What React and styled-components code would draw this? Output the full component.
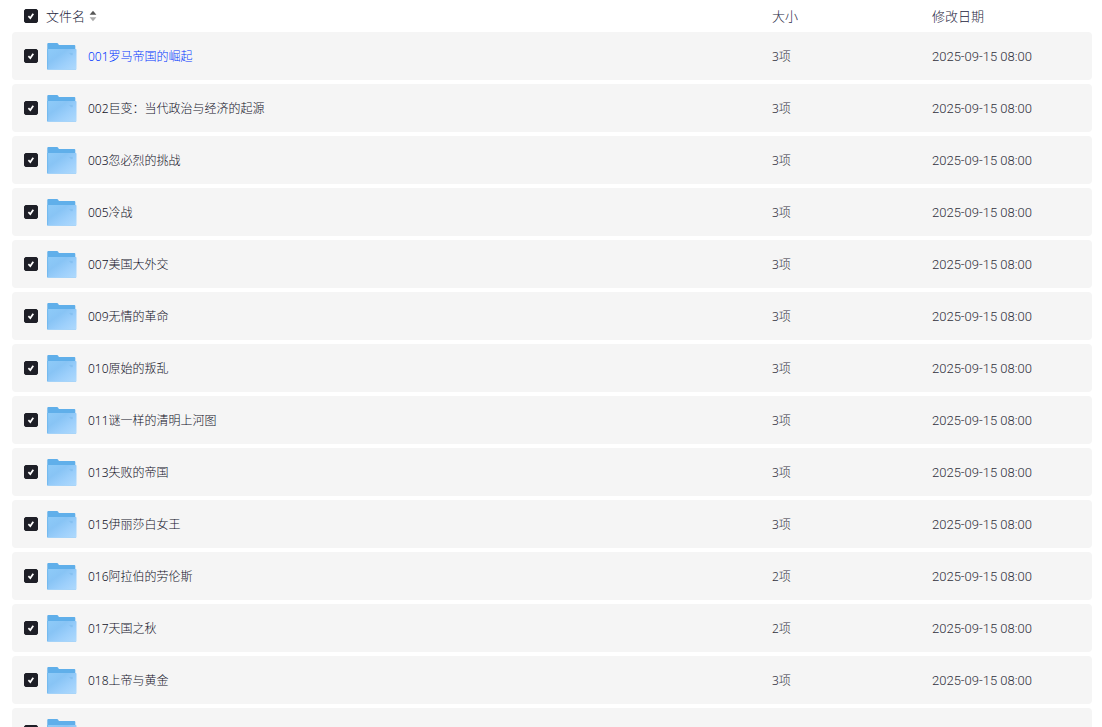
import React, { useState } from 'react';
import styled, { createGlobalStyle } from 'styled-components';

const files = [
  { id: 1, name: '001罗马帝国的崛起', size: '3项', date: '2025-09-15 08:00' },
  { id: 2, name: '002巨变：当代政治与经济的起源', size: '3项', date: '2025-09-15 08:00' },
  { id: 3, name: '003忽必烈的挑战', size: '3项', date: '2025-09-15 08:00' },
  { id: 5, name: '005冷战', size: '3项', date: '2025-09-15 08:00' },
  { id: 7, name: '007美国大外交', size: '3项', date: '2025-09-15 08:00' },
  { id: 9, name: '009无情的革命', size: '3项', date: '2025-09-15 08:00' },
  { id: 10, name: '010原始的叛乱', size: '3项', date: '2025-09-15 08:00' },
  { id: 11, name: '011谜一样的清明上河图', size: '3项', date: '2025-09-15 08:00' },
  { id: 13, name: '013失败的帝国', size: '3项', date: '2025-09-15 08:00' },
  { id: 15, name: '015伊丽莎白女王', size: '3项', date: '2025-09-15 08:00' },
  { id: 16, name: '016阿拉伯的劳伦斯', size: '2项', date: '2025-09-15 08:00' },
  { id: 17, name: '017天国之秋', size: '2项', date: '2025-09-15 08:00' },
  { id: 18, name: '018上帝与黄金', size: '3项', date: '2025-09-15 08:00' },
  // still loading
  { id: 19, name: '', size: '', date: '' },
];

function Check({ label, checked, onChange }) {
  return (
    <CheckBox>
      <input
        type="checkbox"
        aria-label={label}
        checked={checked}
        onChange={onChange}
      />
      {checked && (
        <svg viewBox="0 0 14 14" aria-hidden="true">
          <path
            d="M4.4 7.2 6.3 9.1 9.3 4.7"
            fill="none"
            stroke="#fff"
            strokeWidth="1.7"
          />
        </svg>
      )}
    </CheckBox>
  );
}

function FolderIcon() {
  return (
    <Folder viewBox="0 0 32 32" aria-hidden="true">
      <defs>
        <linearGradient id="front" x1="0" y1="0" x2="1" y2="1">
          <stop offset="0" stopColor="#8ecbf8" />
          <stop offset="0.35" stopColor="#88c4f5" />
          <stop offset="0.65" stopColor="#9ccffb" />
          <stop offset="1" stopColor="#b0dafd" />
        </linearGradient>
      </defs>
      <path
        d="M1.3 4q0-1 1-1H11q.8 0 1.2.7l.7 1.3H28.4q.9 0 .9.9V29H1.3z"
        fill="#60afea"
      />
      <path
        d="M2.2 9h27.6q.7 0 .7.7V29q0 .8-.8.8H2.2q-.9 0-.9-.9V9.7Q1.3 9 2.2 9z"
        fill="url(#front)"
      />
      <path d="M1.6 9v20.4" stroke="#6cb4ed" strokeWidth=".7" />
      <path d="M2 29.5h28" stroke="#9dd0f8" strokeWidth=".7" />
      <path d="M23.4 13.4h3.4M24.4 14.6h2.4" stroke="#7fbcee" strokeWidth=".7" />
    </Folder>
  );
}

function App() {
  const [selected, setSelected] = useState(files.map((f) => f.id));

  const toggle = (id) => {
    setSelected((prev) =>
      prev.includes(id) ? prev.filter((n) => n !== id) : [...prev, id]
    );
  };

  const allSelected = selected.length === files.length;

  const toggleAll = () => {
    setSelected(allSelected ? [] : files.map((f) => f.id));
  };

  return (
    <Container>
      <GlobalStyle />
      <FileTable>
        <thead>
          <tr>
            <HeadCell>
              <NameWrap>
                <Check label="全选" checked={allSelected} onChange={toggleAll} />
                <SortButton type="button">
                  文件名
                  <svg width="8" height="12" viewBox="0 0 8 12" aria-hidden="true">
                    <path d="M4 .8 7.4 4.8H.6z" fill="#555" />
                    <path d="M4 11.2 7.4 7.2H.6z" fill="#aaa" />
                  </svg>
                </SortButton>
              </NameWrap>
            </HeadCell>
            <HeadCell $width="160px">大小</HeadCell>
            <HeadCell $width="160px">修改日期</HeadCell>
          </tr>
        </thead>
        <tbody>
          {files.map((file, idx) => (
            <tr key={file.id}>
              <Cell>
                <NameWrap>
                  <Check
                    label={file.name || '文件'}
                    checked={selected.includes(file.id)}
                    onChange={() => toggle(file.id)}
                  />
                  <FolderIcon />
                  <FileLink href="#" $active={idx === 0}>
                    {file.name}
                  </FileLink>
                </NameWrap>
              </Cell>
              <InfoCell>{file.size}</InfoCell>
              <DateCell>{file.date}</DateCell>
            </tr>
          ))}
        </tbody>
      </FileTable>
    </Container>
  );
}

const GlobalStyle = createGlobalStyle`
  * {
    box-sizing: border-box;
  }

  body {
    margin: 0;
    background: #fff;
    font-family: 'Noto Sans', 'Noto Sans CJK SC', sans-serif;
    font-weight: 300;
  }
`;

const Container = styled.div`
  height: 100vh;
  padding: 0 10px 0 12px;
  overflow: hidden;
`;

const FileTable = styled.table`
  width: 100%;
  table-layout: fixed;
  border-collapse: separate;
  border-spacing: 0 4px;
`;

const HeadCell = styled.th`
  width: ${({ $width }) => $width || 'auto'};
  height: 24px;
  padding: 0;
  color: #25253d;
  font-size: 13px;
  font-weight: 300;
  line-height: 20px;
  text-align: left;

  &:first-child {
    padding-left: 12px;
  }
`;

const Cell = styled.td`
  height: 48px;
  padding: 0;
  background: #f5f5f5;
  font-size: 12px;
  line-height: 20px;

  &:first-child {
    padding-left: 12px;
    border-radius: 4px 0 0 4px;
  }

  &:last-child {
    border-radius: 0 4px 4px 0;
  }
`;

const InfoCell = styled(Cell)`
  padding-top: 2px;
  color: #30303c;
`;

const DateCell = styled(InfoCell)`
  font-family: Roboto, sans-serif;
  font-size: 13px;
`;

const NameWrap = styled.div`
  display: flex;
  align-items: center;
`;

const CheckBox = styled.label`
  display: grid;
  width: 14px;
  height: 14px;
  margin-right: 8px;
  cursor: pointer;

  input,
  svg {
    grid-area: 1 / 1;
    width: 14px;
    height: 14px;
    margin: 0;
  }

  input {
    appearance: none;
    border: 1px solid #1e1f27;
    border-radius: 2px;
  }

  input:checked {
    background: #1e1f27;
  }

  svg {
    pointer-events: none;
  }
`;

const SortButton = styled.button`
  display: flex;
  align-items: center;
  gap: 4px;
  padding: 0;
  border: 0;
  background: none;
  color: inherit;
  font: inherit;
  cursor: pointer;
`;

const Folder = styled.svg`
  flex: none;
  width: 32px;
  height: 32px;
  margin-right: 10px;
`;

const FileLink = styled.a`
  padding-top: 2px;
  color: ${({ $active }) => ($active ? '#0036ff' : '#10101f')};
  text-decoration: none;

  &:hover {
    color: #0036ff;
  }
`;

export default App;
